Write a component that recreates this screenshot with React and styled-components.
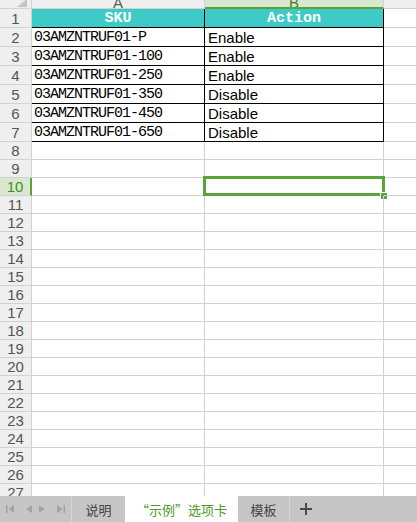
import React from 'react';
import styled, { createGlobalStyle, css } from 'styled-components';

const GREEN = '#5ca23b';
const LIGHT_GREEN = '#d9e7d1';
const GRID = '#d2d2d2';
const HEAD_BG = '#efefef';

const GlobalStyle = createGlobalStyle`
    html, body {
        margin: 0;
        padding: 0;
        overflow: hidden;
        background: #ffffff;
        font-family: "Liberation Sans", Arial, sans-serif;
    }
`;

const Page = styled.div`
    display: flex;
    flex-direction: column;
    width: 417px;
    height: 522px;
`;

const Sheet = styled.div`
    flex: 1;
    min-height: 0;
    overflow: hidden;
    display: grid;
    grid-template-columns: 32px 173px 179px 1fr;
    grid-template-rows: 9px repeat(7, 19px) repeat(20, 18px);
`;

const Corner = styled.div`
    background: ${HEAD_BG};
    border-right: 1px solid ${GRID};
    border-bottom: 1px solid ${GRID};
    box-sizing: border-box;
    display: flex;
    justify-content: flex-end;
    align-items: flex-end;
    padding: 0 4px 1px 0;
`;

const ColHead = styled.div`
    box-sizing: border-box;
    overflow: hidden;
    background: ${({ $active }) => ($active ? LIGHT_GREEN : HEAD_BG)};
    border-right: 1px solid ${GRID};
    border-bottom: ${({ $active }) => ($active ? `2px solid ${GREEN}` : `1px solid ${GRID}`)};
    color: ${({ $active }) => ($active ? '#3f7f22' : '#5b5b5b')};
    font-size: 15px;
    line-height: 5px;
    text-align: center;
`;

const RowHead = styled.div`
    box-sizing: border-box;
    display: flex;
    align-items: center;
    justify-content: center;
    background: ${({ $active }) => ($active ? LIGHT_GREEN : HEAD_BG)};
    border-bottom: 1px solid ${GRID};
    border-right: ${({ $active }) => ($active ? `2px solid ${GREEN}` : `1px solid ${GRID}`)};
    color: ${({ $active }) => ($active ? '#3f8f1e' : '#555555')};
    font-size: 15px;
    overflow: hidden;
`;

const kinds = {
    title: css`
        background: #3ecbc8;
        color: #ffffff;
        font-family: "Liberation Mono", "Courier New", monospace;
        font-weight: bold;
        font-size: 15px;
        justify-content: center;
    `,
    mono: css`
        font-family: "Liberation Mono", "Courier New", monospace;
        font-size: 15px;
        letter-spacing: -1px;
        padding-left: 2px;
    `,
    sans: css`
        font-size: 15px;
        padding-left: 3px;
    `,
    empty: css``,
};

const Cell = styled.div`
    position: relative;
    box-sizing: border-box;
    display: flex;
    align-items: center;
    white-space: nowrap;
    color: #000000;
    border-right: 1px solid ${({ $boxed }) => ($boxed ? '#000000' : GRID)};
    border-bottom: 1px solid ${({ $boxed }) => ($boxed ? '#000000' : GRID)};
    ${({ $kind }) => kinds[$kind]}

    ${({ $selected }) => $selected && css`
        &::before {
            content: '';
            position: absolute;
            top: -2px;
            left: -2px;
            right: -2px;
            bottom: -1px;
            border: 3px solid ${GREEN};
        }
        &::after {
            content: '';
            position: absolute;
            right: -5px;
            bottom: -5px;
            width: 6px;
            height: 6px;
            background: ${GREEN};
            border: 1px solid #ffffff;
        }
    `}
`;

const TabBar = styled.div`
    flex: 0 0 26px;
    display: flex;
    align-items: stretch;
    background: #c6c6c6;
    font-family: "Noto Sans CJK SC", "Liberation Sans", sans-serif;
    font-size: 13px;
`;

const Nav = styled.div`
    width: 72px;
    display: flex;
    align-items: center;
    padding-left: 5px;
    box-sizing: border-box;
    border-right: 1px solid #d6d6d6;
`;

const NavIcon = styled.svg`
    width: 10px;
    height: 10px;
    margin-right: ${({ $gap }) => $gap}px;
    fill: #a3a3a3;
`;

const Tab = styled.div`
    display: flex;
    align-items: center;
    justify-content: center;
    width: ${({ $w }) => $w}px;
    background: ${({ $active }) => ($active ? '#ffffff' : 'transparent')};
    color: ${({ $active }) => ($active ? '#4b9a2b' : '#444444')};
    border-right: ${({ $sep }) => ($sep ? '1px solid #d6d6d6' : 'none')};
    box-sizing: border-box;
`;

const Plus = styled.div`
    width: 32px;
    display: flex;
    align-items: center;
    justify-content: center;
`;

const rows = [
    ['03AMZNTRUF01-P', 'Enable'],
    ['03AMZNTRUF01-100', 'Enable'],
    ['03AMZNTRUF01-250', 'Enable'],
    ['03AMZNTRUF01-350', 'Disable'],
    ['03AMZNTRUF01-450', 'Disable'],
    ['03AMZNTRUF01-650', 'Disable'],
];

const SELECTED_ROW = 10;

export default function App() {
    const lines = [];
    for (let n = 1; n <= 27; n++) {
        const active = n === SELECTED_ROW;
        let a = null;
        let b = null;
        let kindA = 'empty';
        let kindB = 'empty';
        if (n === 1) {
            a = 'SKU';
            b = 'Action';
            kindA = kindB = 'title';
        } else if (rows[n - 2]) {
            a = rows[n - 2][0];
            b = rows[n - 2][1];
            kindA = 'mono';
            kindB = 'sans';
        }
        const boxed = n <= 7;
        lines.push(
            <React.Fragment key={n}>
                <RowHead $active={active}>{n}</RowHead>
                <Cell $kind={kindA} $boxed={boxed}>{a}</Cell>
                <Cell $kind={kindB} $boxed={boxed} $selected={active}>{b}</Cell>
                <Cell $kind="empty" />
            </React.Fragment>
        );
    }

    return (
        <Page>
            <GlobalStyle />
            <Sheet>
                <Corner>
                    <svg width="10" height="8" viewBox="0 0 10 8">
                        <polygon points="10,0 10,8 0,8" fill="#c4c4c4" />
                    </svg>
                </Corner>
                <ColHead>A</ColHead>
                <ColHead $active>B</ColHead>
                <ColHead />
                {lines}
            </Sheet>
            <TabBar>
                <Nav>
                    <NavIcon viewBox="0 0 10 10" $gap={9}>
                        <rect x="1" y="1" width="1.5" height="8" />
                        <polygon points="9,1 9,9 3.5,5" />
                    </NavIcon>
                    <NavIcon viewBox="0 0 10 10" $gap={3}>
                        <polygon points="8,1 8,9 2,5" />
                    </NavIcon>
                    <NavIcon viewBox="0 0 10 10" $gap={9}>
                        <polygon points="2,1 2,9 8,5" />
                    </NavIcon>
                    <NavIcon viewBox="0 0 10 10" $gap={0}>
                        <polygon points="1,1 1,9 6.5,5" />
                        <rect x="7.5" y="1" width="1.5" height="8" />
                    </NavIcon>
                </Nav>
                <Tab $w={53}>说明</Tab>
                <Tab $w={113} $active>“示例”选项卡</Tab>
                <Tab $w={52} $sep>模板</Tab>
                <Plus>
                    <svg width="12" height="12" viewBox="0 0 12 12">
                        <rect x="5" y="0" width="2" height="12" fill="#4a4a4a" />
                        <rect x="0" y="5" width="12" height="2" fill="#4a4a4a" />
                    </svg>
                </Plus>
            </TabBar>
        </Page>
    );
}
